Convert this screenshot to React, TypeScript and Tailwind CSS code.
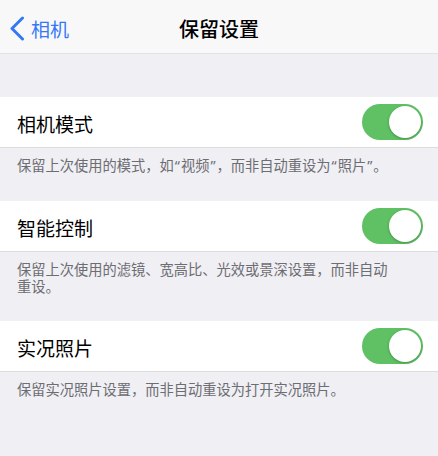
import type { ReactNode } from "react";

const font = { fontFamily: '"Noto Sans CJK SC", "Noto Sans", sans-serif' };

function Q({ children }: { children: ReactNode }) {
  // narrow latin quotes, as iOS renders them
  return <span className="px-[1px] font-['Noto_Sans']">{children}</span>;
}

function Toggle() {
  return (
    <div className="flex h-[36px] w-[61px] items-center justify-end rounded-full bg-[#5fc163] p-[2px]">
      <div className="h-[32px] w-[32px] rounded-full bg-white shadow-[0_1px_3px_rgba(0,0,0,0.25)]" />
    </div>
  );
}

function Row({ label }: { label: string }) {
  return (
    <div className="flex h-[51px] items-center justify-between border-b border-[#dcdce0] bg-white pl-[17px] pr-[15px]">
      <span className="pt-[2px] text-[19px] leading-none text-black">{label}</span>
      <Toggle />
    </div>
  );
}

function Footer({ children }: { children: ReactNode }) {
  return (
    <p className="pb-[27px] pl-[17px] pr-[48px] pt-[8px] text-[14.25px] leading-[17px] text-[#6d6d72]">
      {children}
    </p>
  );
}

export default function App() {
  return (
    <div className="min-h-[456px] w-[438px] bg-[#efeff4]" style={font}>
      <header className="relative flex h-[54px] items-center justify-center border-b border-[#e2e2e5] bg-[#f8f8f9] pt-[4px]">
        <div className="absolute left-[9px] top-0 flex h-full items-center gap-[6px] pt-[4px] text-[#3478f6]">
          <svg width="16" height="25" viewBox="0 0 16 25" fill="none">
            <path d="M13.5 2 L3 12.5 L13.5 23" stroke="currentColor" strokeWidth="3" strokeLinecap="round" strokeLinejoin="round" />
          </svg>
          <span className="text-[19px] leading-none">相机</span>
        </div>
        <h1 className="text-[20px] font-medium leading-none text-black">保留设置</h1>
      </header>
      <div className="h-[43px]" />
      <Row label="相机模式" />
      <Footer>
        保留上次使用的模式，如<Q>“</Q>视频<Q>”</Q>，而非自动重设为<Q>“</Q>照片<Q>”</Q>。
      </Footer>
      <Row label="智能控制" />
      <Footer>保留上次使用的滤镜、宽高比、光效或景深设置，而非自动重设。</Footer>
      <Row label="实况照片" />
      <Footer>保留实况照片设置，而非自动重设为打开实况照片。</Footer>
    </div>
  );
}
